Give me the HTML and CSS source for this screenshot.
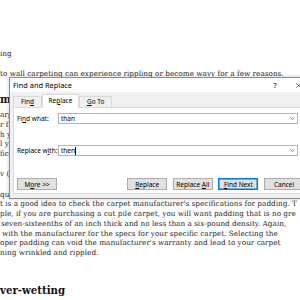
FILE: index.html
```html
<!DOCTYPE html>
<html lang="en">

<head>
    <meta charset="UTF-8">
    <meta name="viewport" content="width=device-width, initial-scale=1.0">
    <title>Find and Replace</title>
    <link rel="stylesheet" href="styles.css">
</head>

<body>

    <div class="article">
        <p>ing</p>
        <p>to wall carpeting can experience rippling or become wavy for a few reasons.</p>
        <!-- only the strip left of the dialog shows through -->
        <h2 class="heading">mp</h2>
        <p>arp<br>r f<br>h y<br>l y<br>fic</p>
        <p>v (</p>
        <p>
            <span class="line">qua</span>
            <span class="line">t is a good idea to check the carpet manufacturer's specifications for padding. T</span>
            <span class="line">ple, if you are purchasing a cut pile carpet, you will want padding that is no gre</span>
            <span class="line nudge">seven-sixteenths of an inch thick and no less than a six-pound density. Again,</span>
            <span class="line indent">with the manufacturer for the specs for your specific carpet. Selecting the</span>
            <span class="line">oper padding can void the manufacturer's warranty and lead to your carpet</span>
            <span class="line">ning wrinkled and rippled.</span>
        </p>
        <h2 class="heading lower">ver-wetting</h2>
    </div>

    <div class="dialog">
        <div class="titlebar">
            <span class="title">Find and Replace</span>
            <span class="help">?</span>
            <span class="close">
                <svg width="5" height="5" viewBox="0 0 5 5">
                    <path d="M0.3 0.3 L4.7 4.7 M4.7 0.3 L0.3 4.7" stroke="#222" stroke-width="0.6" fill="none" />
                </svg>
            </span>
        </div>

        <div class="tabs">
            <div class="tab">Fin<u>d</u></div>
            <div class="tab active">Re<u>p</u>lace</div>
            <div class="tab"><u>G</u>o To</div>
        </div>

        <div class="panel">
            <div class="field">
                <label>Fi<u>n</u>d what:</label>
                <div class="combo">
                    <span class="value">than</span>
                    <svg class="chevron" width="5" height="3" viewBox="0 0 5 3">
                        <polyline points="0.4,0.4 2.5,2.5 4.6,0.4" stroke="#444" stroke-width="0.6" fill="none" />
                    </svg>
                </div>
            </div>

            <div class="field second">
                <label>Replace w<u>i</u>th:</label>
                <div class="combo">
                    <span class="value">then</span>
                    <span class="caret"></span>
                    <svg class="chevron" width="5" height="3" viewBox="0 0 5 3">
                        <polyline points="0.4,0.4 2.5,2.5 4.6,0.4" stroke="#444" stroke-width="0.6" fill="none" />
                    </svg>
                </div>
            </div>

            <div class="actions">
                <button class="btn">M<u>o</u>re &gt;&gt;</button>
                <button class="btn push"><u>R</u>eplace</button>
                <button class="btn">Replace <u>A</u>ll</button>
                <button class="btn default"><u>F</u>ind Next</button>
                <button class="btn">Cancel</button>
            </div>
        </div>
    </div>

</body>

</html>
```

FILE: styles.css
```css
html,
body {
    margin: 0;
}

body {
    width: 300px;
    height: 300px;
    overflow: hidden;
    position: relative;
    background-color: #fff;
    font-family: "DejaVu Serif", Georgia, serif;
    color: #1e1e1e;
}

/* Article text behind the dialog */
.article {
    white-space: nowrap;
    font-size: 7.3px;
    line-height: 9.75px;
    padding-top: 49px;
}

.article p {
    margin: 0 0 10.5px;
}

.line {
    display: block;
}

.nudge {
    padding-left: 1px;
}

.indent {
    padding-left: 2px;
}

.heading {
    font-size: 10.2px;
    line-height: 14px;
    margin: 13px 0 4px;
    color: #111;
}

.heading.lower {
    margin-top: 25px;
}

/* Dialog */
.dialog {
    position: absolute;
    left: 9px;
    top: 77px;
    width: 303px;
    box-sizing: border-box;
    border: 1px solid #8c8c8c;
    background-color: #f0f0f0;
    box-shadow: 0 0 4px rgba(0, 0, 0, 0.2);
    font-family: "Noto Sans", "Open Sans", sans-serif;
    font-size: 6.5px;
    color: #000;
}

.titlebar {
    display: flex;
    align-items: center;
    height: 14px;
    padding-left: 3px;
    background-color: #fff;
}

.title {
    font-size: 7.4px;
}

.help {
    margin-left: auto;
    width: 22px;
    text-align: center;
    font-size: 7px;
}

.close {
    width: 25px;
    display: flex;
    justify-content: center;
}

.tabs {
    display: flex;
    align-items: flex-end;
    height: 15px;
    padding-left: 3px;
    position: relative;
    z-index: 1;
}

.tab {
    height: 11px;
    line-height: 10px;
    padding: 0 7px;
    box-sizing: border-box;
    border: 1px solid #d9d9d9;
    border-bottom: none;
    background-color: #f0f0f0;
}

.tab.active {
    height: 14px;
    line-height: 12px;
    padding: 0 5.5px;
    margin-bottom: -1px;
    background-color: #fff;
}

.panel {
    margin: 0 3px 4px 3px;
    padding: 5px 3px 3px 3px;
    background-color: #fff;
    border: 1px solid #d9d9d9;
}

.field {
    display: flex;
    align-items: center;
}

.field.second {
    margin-top: 21px;
}

.field label {
    width: 41px;
}

.combo {
    width: 240px;
    height: 11px;
    box-sizing: border-box;
    border: 1px solid #b4b4b4;
    display: flex;
    align-items: center;
    padding-left: 2px;
}

.caret {
    width: 1px;
    height: 8px;
    background-color: #000;
}

.chevron {
    margin-left: auto;
    margin-right: 2px;
}

.actions {
    display: flex;
    gap: 5.6px;
    margin-top: 22px;
}

.btn {
    width: 40px;
    height: 12px;
    padding: 0;
    font-family: inherit;
    font-size: 6.5px;
    color: #000;
    background-color: #e1e1e1;
    border: 1px solid #adadad;
}

.btn.push {
    margin-left: auto;
}

.btn.default {
    border-color: #0078d7;
    box-shadow: inset 0 0 0 0.5px #0078d7;
}
```
